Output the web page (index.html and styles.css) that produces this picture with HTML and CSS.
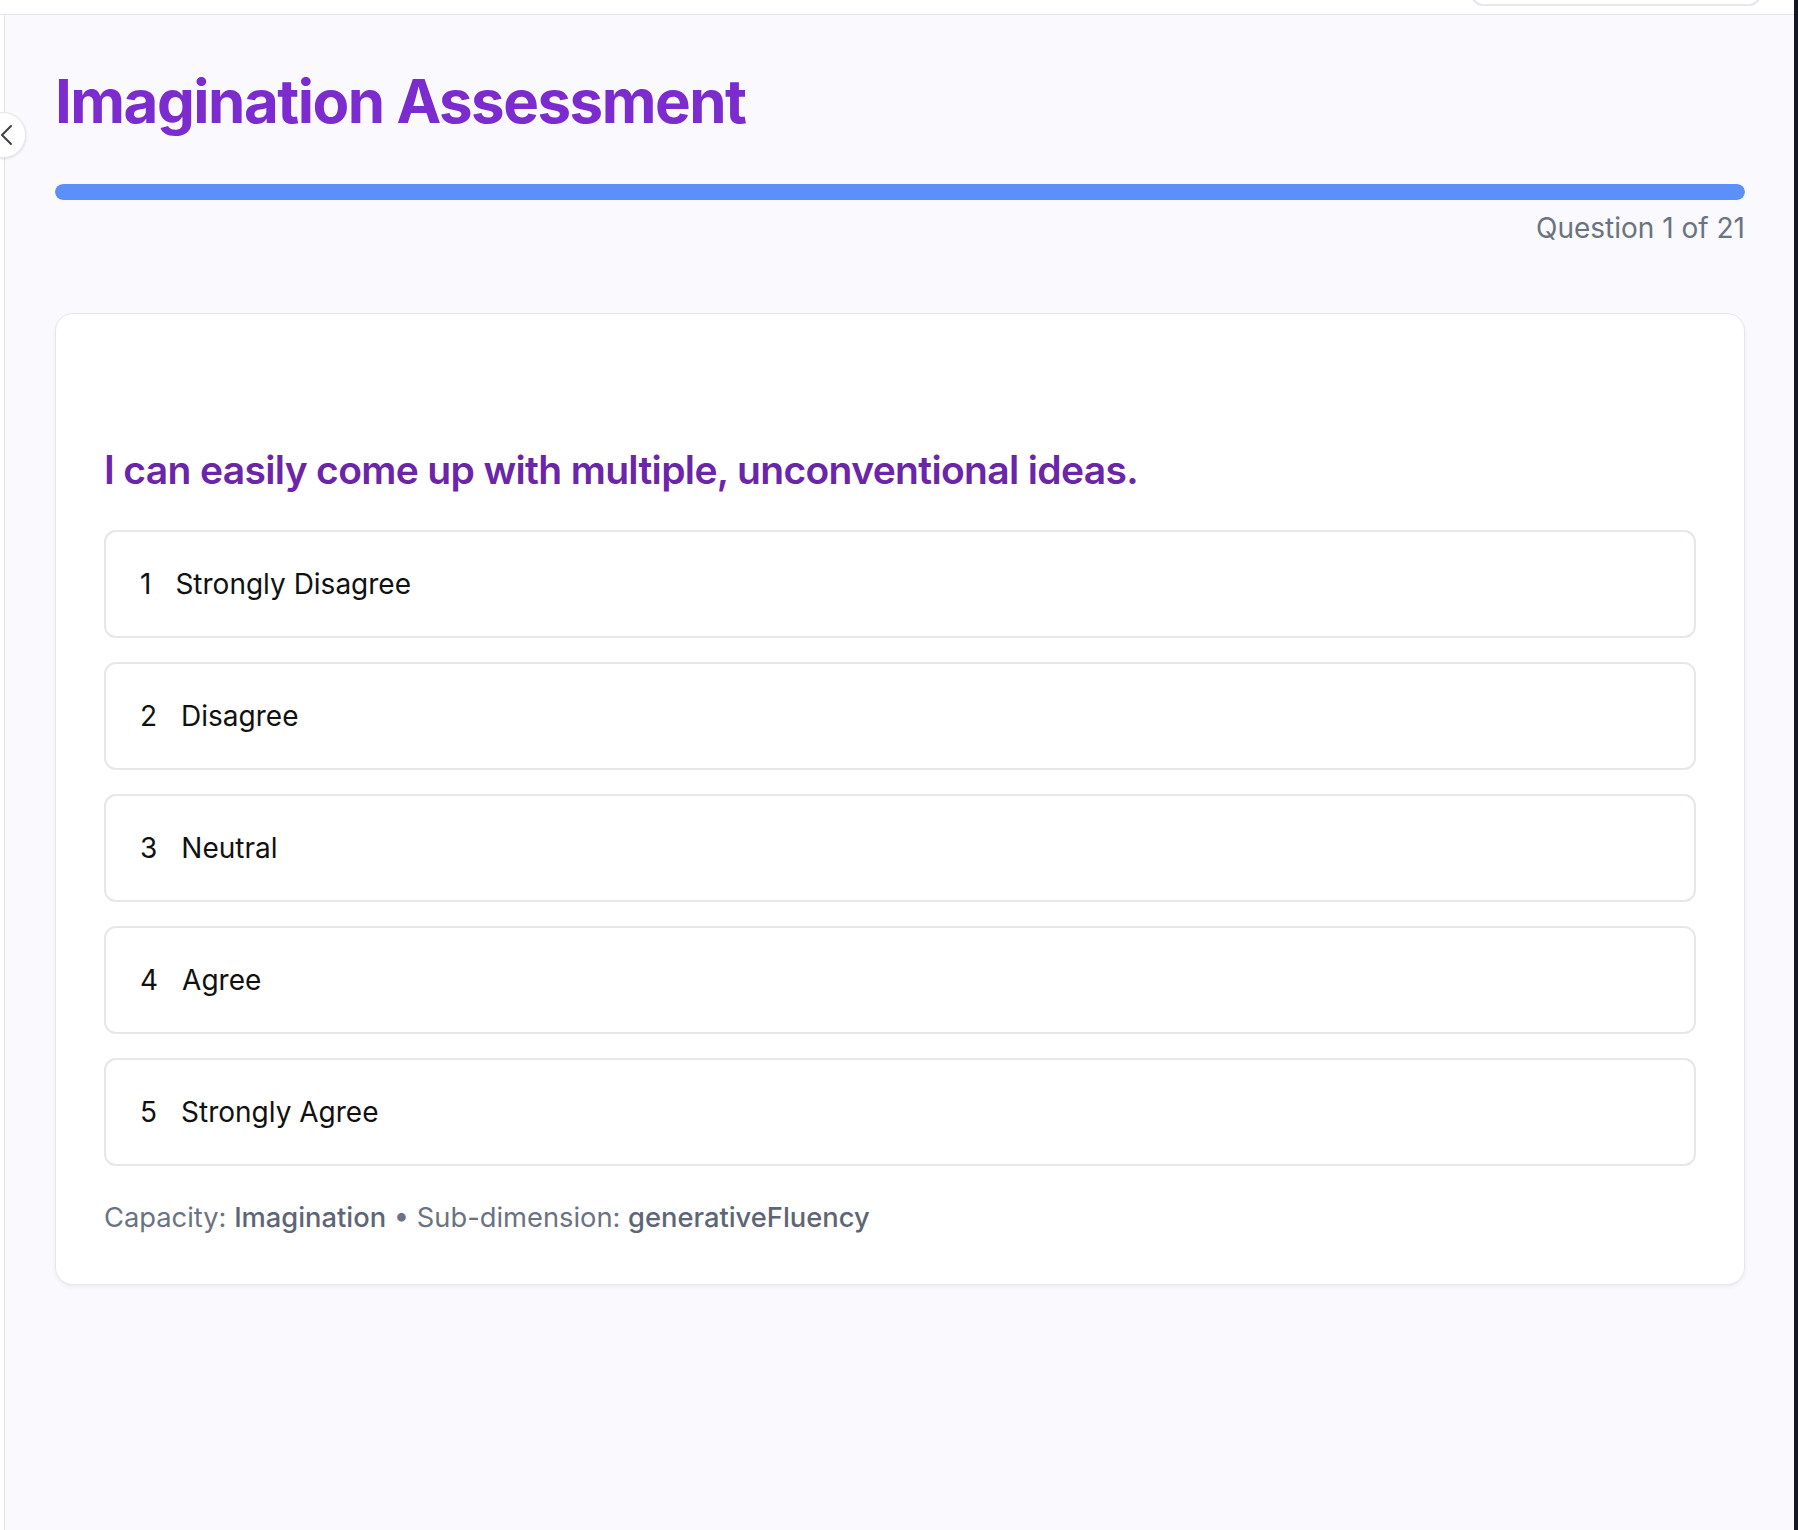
FILE: index.html
```html
<!DOCTYPE html>
<html lang="en">
<head>
<meta charset="utf-8">
<title>Imagination Assessment</title>
<link rel="stylesheet" href="styles.css">
</head>
<body>
<div class="app">
  <div class="shell">
    <header class="topbar">
      <div class="top-btn"></div>
    </header>
    <div class="workspace">
      <aside class="sidebar">
        <button class="collapse" aria-label="Collapse sidebar">
          <svg width="24" height="24" viewBox="0 0 24 24" fill="none" stroke="#3f3f46" stroke-width="2" stroke-linecap="round" stroke-linejoin="round"><path d="M15 3 L6 12 L15 21"/></svg>
        </button>
      </aside>
      <main class="main">
        <h1 class="title">Imagination Assessment</h1>
        <div class="progress"><div class="progress-fill" style="width:100%"></div></div>
        <div class="progress-label">Question 1 of 21</div>
        <section class="card">
          <h2 class="question">I can easily come up with multiple, unconventional ideas.</h2>
          <div class="options">
            <button class="option"><span class="num">1</span><span class="label">Strongly Disagree</span></button>
            <button class="option"><span class="num">2</span><span class="label">Disagree</span></button>
            <button class="option"><span class="num">3</span><span class="label">Neutral</span></button>
            <button class="option"><span class="num">4</span><span class="label">Agree</span></button>
            <button class="option"><span class="num">5</span><span class="label">Strongly Agree</span></button>
          </div>
          <p class="meta">Capacity: <span class="strong">Imagination</span> • Sub-dimension: <span class="strong">generativeFluency</span></p>
        </section>
      </main>
    </div>
  </div>
  <div class="edge"></div>
</div>
</body>
</html>
```

FILE: styles.css
```css
* { box-sizing: border-box; }

html, body {
  margin: 0;
  padding: 0;
  height: 100%;
}

body {
  font-family: Inter, "Noto Sans", "Liberation Sans", sans-serif;
  background: #ffffff;
  color: #111827;
  overflow: hidden;
}

.app {
  display: flex;
  height: 1530px;
}

.shell {
  flex: 1;
  display: flex;
  flex-direction: column;
  min-width: 0;
}

.edge {
  width: 4px;
  background: #111827;
}

.topbar {
  height: 15px;
  background: #ffffff;
  border-bottom: 1px solid #e6e4ef;
  display: flex;
  justify-content: flex-end;
  align-items: flex-end;
  overflow: hidden;
  padding-right: 33px;
}

.top-btn {
  width: 290px;
  height: 40px;
  margin-bottom: 8px;
  border: 2px solid #e5e7eb;
  border-radius: 12px;
  background: #ffffff;
  flex-shrink: 0;
}

.workspace {
  flex: 1;
  display: flex;
  min-height: 0;
}

.sidebar {
  width: 5px;
  background: #ffffff;
  border-right: 1px solid #e4e4ec;
  position: relative;
  z-index: 2;
}

.collapse {
  position: absolute;
  left: -20px;
  top: 97px;
  width: 46px;
  height: 46px;
  border-radius: 50%;
  background: #ffffff;
  border: 1px solid #e5e7eb;
  box-shadow: 0 1px 3px rgba(0,0,0,0.12);
  padding: 0;
  display: flex;
  align-items: center;
  justify-content: center;
  padding-left: 10px;
}

.main {
  flex: 1;
  background: #f9f9fe;
  padding: 56px 49px 48px 50px;
  min-width: 0;
}

.title {
  margin: 0;
  font-size: 60px;
  line-height: 60px;
  font-weight: 700;
  color: #7b2bce;
  letter-spacing: -1.5px;
}

.progress {
  margin-top: 53px;
  height: 16px;
  border-radius: 8px;
  background: #e5e7eb;
  overflow: hidden;
}

.progress-fill {
  height: 100%;
  background: #5d8ff9;
  border-radius: 8px;
}

.progress-label {
  margin-top: 8px;
  text-align: right;
  font-size: 28px;
  line-height: 40px;
  color: #6b7280;
}

.card {
  margin-top: 65px;
  background: #ffffff;
  border: 1px solid #e5e7eb;
  border-radius: 18px;
  box-shadow: 0 2px 4px rgba(0,0,0,0.06);
  padding: 132px 48px 48px 48px;
}

.question {
  margin: 0;
  font-size: 39px;
  line-height: 48px;
  font-weight: 600;
  color: #6b25aa;
  letter-spacing: -0.65px;
}

.options {
  margin-top: 36px;
  display: flex;
  flex-direction: column;
  gap: 24px;
}

.option {
  height: 108px;
  display: flex;
  align-items: center;
  background: #ffffff;
  border: 2px solid #e5e7eb;
  border-radius: 12px;
  padding: 0 34px;
  font-family: inherit;
  font-size: 28px;
  color: #111111;
  text-align: left;
}

.num {
  margin-right: 24px;
}

.meta {
  margin: 34px 0 0 0;
  font-size: 27.3px;
  line-height: 36px;
  color: #6b7280;
}

.meta .strong {
  font-weight: 500;
  color: #5f6574;
}
```
